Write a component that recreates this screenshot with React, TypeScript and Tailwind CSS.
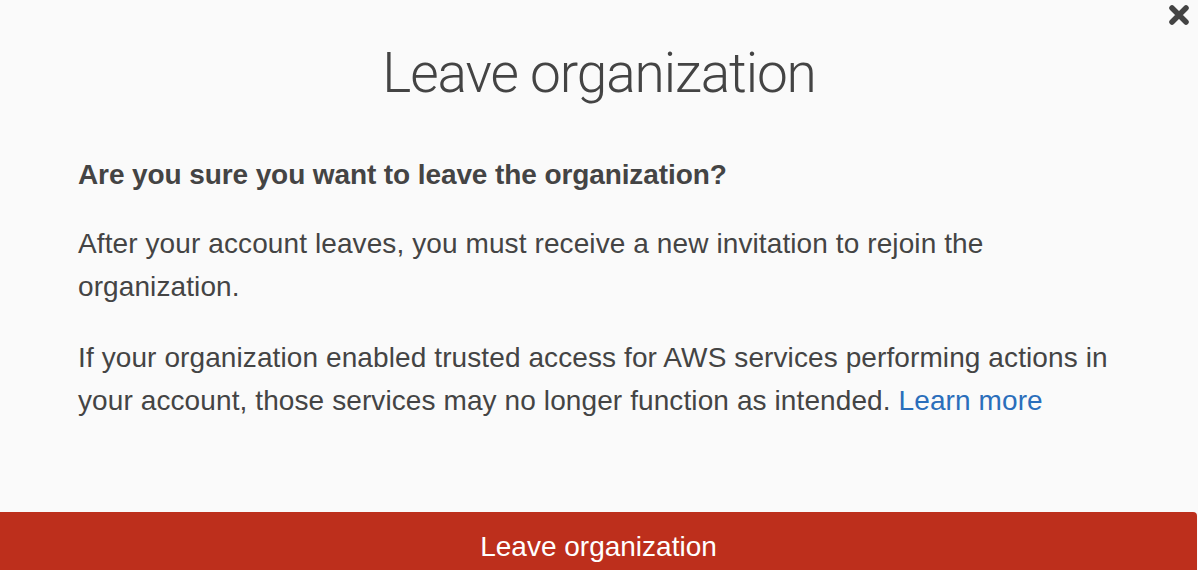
export default function App() {
  return (
    <div className="h-[570px] w-[1198px] overflow-hidden bg-[#fafafa]">
      <div className="relative flex h-[582px] w-[1198px] flex-col font-['Liberation_Sans',Arial,sans-serif] text-[#444]">
        <button className="absolute left-[1168px] top-[4px] text-[#444]">
          <svg width="22" height="22" viewBox="0 0 22 22">
            <path d="M4 4 L18 18 M18 4 L4 18" stroke="currentColor" strokeWidth="5.5" strokeLinecap="round" />
          </svg>
        </button>

        <h1 className="pt-[41px] text-center font-['Roboto',sans-serif] text-[55px] font-light leading-[64px] tracking-[-1.1px] text-[#444]">
          Leave organization
        </h1>

        <div className="flex flex-col px-[78px] pt-[48px] text-[28px] leading-[43px] tracking-[0.1px]">
          <p className="font-bold tracking-[-0.1px]">Are you sure you want to leave the organization?</p>
          <p className="mt-[26px]">
            After your account leaves, you must receive a new invitation to rejoin the
            organization.
          </p>
          <p className="mt-[28px]">
            If your organization enabled trusted access for AWS services performing actions in
            your account, those services may no longer function as intended.{" "}
            <a href="#" className="text-[#2a6ebb]">
              Learn more
            </a>
          </p>
        </div>

        <button className="mt-auto h-[70px] w-[1197px] shrink-0 rounded-tr-[4px] bg-[#bd2f1c] text-[28px] text-white">
          Leave organization
        </button>
      </div>
    </div>
  );
}
